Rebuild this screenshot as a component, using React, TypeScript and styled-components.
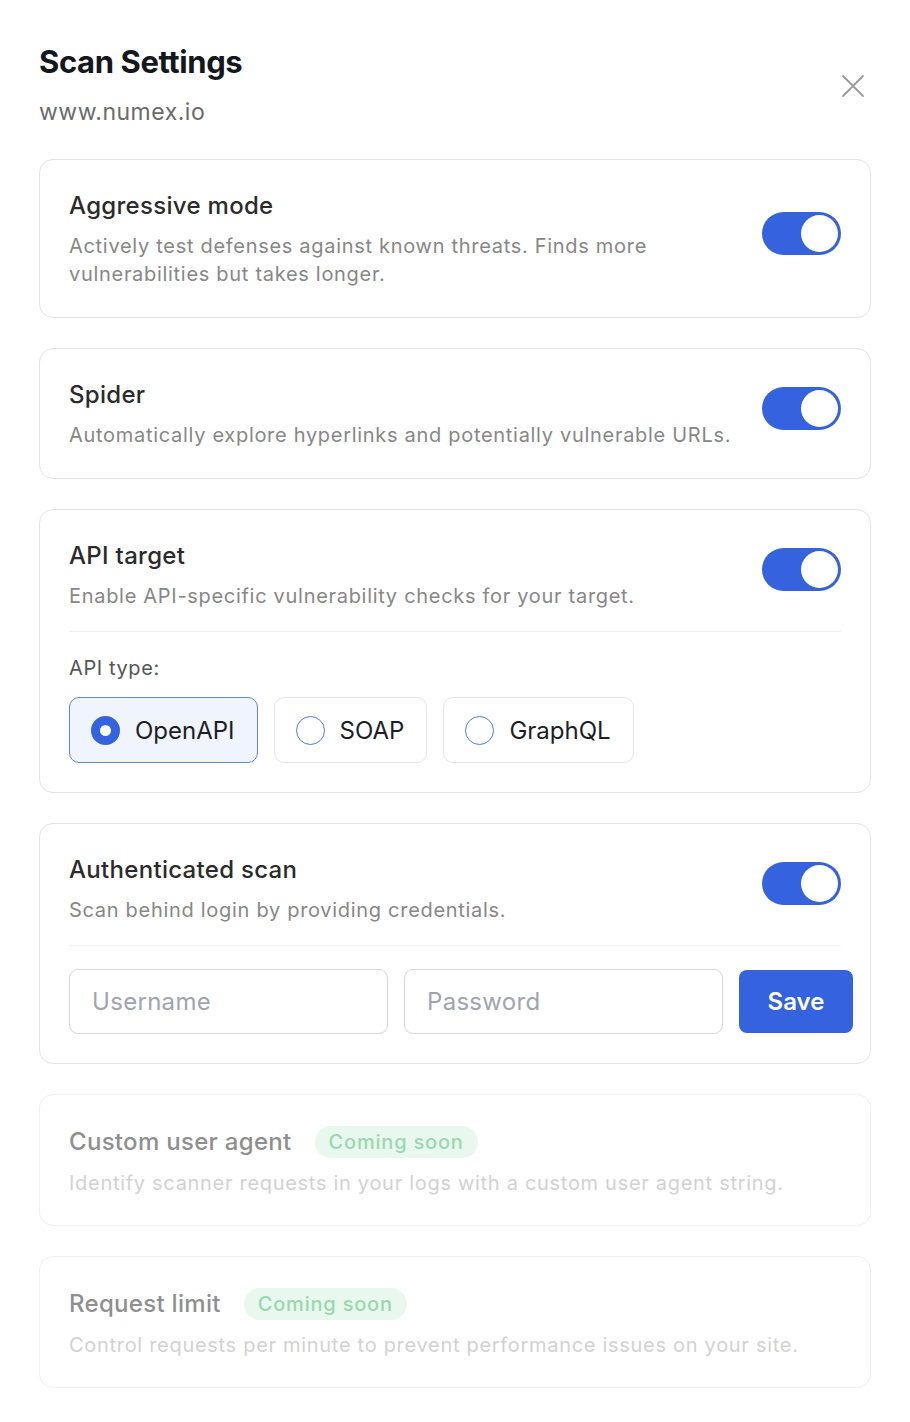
import React, { useState } from "react";
import styled, { createGlobalStyle } from "styled-components";

const Global = createGlobalStyle`
  html, body { margin: 0; padding: 0; background: #fff; }
  body { font-family: Inter, "Noto Sans", sans-serif; -webkit-font-smoothing: antialiased; }
  * { box-sizing: border-box; }
`;

const Page = styled.div`
  width: 910px;
  padding: 42px 39px 36px 39px;
  display: flex;
  flex-direction: column;
`;

const Header = styled.div`
  display: flex;
  justify-content: space-between;
  align-items: flex-start;
  margin-bottom: 32px;
`;

const HeaderText = styled.div`
  display: flex;
  flex-direction: column;
  gap: 15px;
`;

const Title = styled.h1`
  margin: 0;
  font-size: 31px;
  line-height: 40px;
  font-weight: 700;
  letter-spacing: -0.4px;
  color: #14171c;
`;

const Subtitle = styled.div`
  font-size: 23px;
  line-height: 30px;
  letter-spacing: 0.5px;
  color: #6b6b6b;
`;

const CloseButton = styled.button`
  border: none;
  background: none;
  padding: 0;
  margin: 32px 6px 0 0;
  width: 24px;
  height: 24px;
  color: #9a9a9a;
  cursor: pointer;
`;

const Cards = styled.div`
  display: flex;
  flex-direction: column;
  gap: 30px;
`;

const Card = styled.div<{ $disabled?: boolean }>`
  border: 1px solid ${(p) => (p.$disabled ? "#efefef" : "#e4e4e4")};
  border-radius: 14px;
  padding: 31px 29px ${(p) => (p.$disabled ? "28px" : "29px")} 29px;
  display: flex;
  flex-direction: column;
`;

const Row = styled.div`
  display: flex;
  justify-content: space-between;
  align-items: center;
  gap: 24px;
`;

const TextCol = styled.div`
  display: flex;
  flex-direction: column;
  gap: 11px;
  flex: 1;
  max-width: 600px;
`;

const CardTitle = styled.div<{ $disabled?: boolean }>`
  display: flex;
  align-items: center;
  gap: 23px;
  font-size: 24px;
  line-height: 30px;
  font-weight: 500;
  letter-spacing: 0.3px;
  color: ${(p) => (p.$disabled ? "#8f8f8f" : "#2b2b2b")};
`;

const Desc = styled.div<{ $disabled?: boolean; $wide?: boolean }>`
  font-size: 20px;
  line-height: 28px;
  letter-spacing: 0.7px;
  color: ${(p) => (p.$disabled ? "#d2d2d2" : "#878787")};
  ${(p) => (p.$wide ? "max-width: none; white-space: nowrap;" : "")}
`;

const Badge = styled.span`
  background: #e9f8ef;
  color: #9ad7b0;
  font-size: 20px;
  line-height: 24px;
  font-weight: 500;
  letter-spacing: 0.8px;
  padding: 4px 14px;
  border-radius: 999px;
`;

const Toggle = styled.button<{ $on: boolean }>`
  flex: none;
  width: 79px;
  height: 43px;
  margin-bottom: 13px;
  border-radius: 999px;
  border: none;
  padding: 3px;
  background: ${(p) => (p.$on ? "#3563e0" : "#d5d5d5")};
  display: flex;
  justify-content: ${(p) => (p.$on ? "flex-end" : "flex-start")};
  cursor: pointer;
`;

const Knob = styled.span`
  width: 37px;
  height: 37px;
  border-radius: 50%;
  background: #fff;
`;

const Divider = styled.hr`
  border: none;
  border-top: 1px solid #f0f0f0;
  margin: 21px 0 20px 0;
`;

const Label = styled.div`
  font-size: 20px;
  line-height: 32px;
  letter-spacing: 0.6px;
  color: #555;
  margin-bottom: 13px;
`;

const RadioGroup = styled.div`
  display: flex;
  gap: 16px;
`;

const RadioOption = styled.button<{ $selected: boolean }>`
  height: 66px;
  padding: 0 22px 0 21px;
  display: flex;
  align-items: center;
  gap: 15px;
  border-radius: 10px;
  border: 1px solid ${(p) => (p.$selected ? "#5b86ea" : "#e6e6e6")};
  background: ${(p) => (p.$selected ? "#eff4fd" : "#fff")};
  font-family: inherit;
  font-size: 24px;
  color: #1b1e24;
  cursor: pointer;
`;

const RadioDot = styled.span<{ $selected: boolean }>`
  width: 29px;
  height: 29px;
  border-radius: 50%;
  flex: none;
  ${(p) =>
    p.$selected
      ? "border: 9.5px solid #3563e0; background: #fff;"
      : "border: 1.5px solid #4f7be6; background: #fff;"}
`;

const FieldRow = styled.div`
  display: flex;
  align-items: center;
  gap: 16px;
  margin: 3px -12px 0 0;
`;

const Input = styled.input`
  flex: 1;
  min-width: 0;
  height: 65px;
  border: 1px solid #d6d6d6;
  border-radius: 9px;
  padding: 0 22px;
  font-family: inherit;
  font-size: 24px;
  letter-spacing: 0.3px;
  color: #222;
  outline: none;
  &::placeholder { color: #a0a4ac; }
`;

const SaveButton = styled.button`
  flex: none;
  width: 114px;
  height: 63px;
  border: none;
  border-radius: 8px;
  background: #3563e0;
  color: #fff;
  font-family: inherit;
  font-size: 24px;
  font-weight: 600;
  cursor: pointer;
`;

function Switch({ initial = true }: { initial?: boolean }) {
  const [on, setOn] = useState(initial);
  return (
    <Toggle $on={on} onClick={() => setOn(!on)} aria-pressed={on}>
      <Knob />
    </Toggle>
  );
}

export default function App() {
  const [api, setApi] = useState("OpenAPI");
  return (
    <>
      <Global />
      <Page>
        <Header>
          <HeaderText>
            <Title>Scan Settings</Title>
            <Subtitle>www.numex.io</Subtitle>
          </HeaderText>
          <CloseButton aria-label="Close">
            <svg width="24" height="24" viewBox="0 0 24 24" fill="none" stroke="currentColor" strokeWidth="1.8" strokeLinecap="round">
              <path d="M2 2 L22 22 M22 2 L2 22" />
            </svg>
          </CloseButton>
        </Header>
        <Cards>
          <Card>
            <Row>
              <TextCol>
                <CardTitle>Aggressive mode</CardTitle>
                <Desc>Actively test defenses against known threats. Finds more vulnerabilities but takes longer.</Desc>
              </TextCol>
              <Switch />
            </Row>
          </Card>
          <Card>
            <Row>
              <TextCol>
                <CardTitle>Spider</CardTitle>
                <Desc $wide>Automatically explore hyperlinks and potentially vulnerable URLs.</Desc>
              </TextCol>
              <Switch />
            </Row>
          </Card>
          <Card>
            <Row>
              <TextCol>
                <CardTitle>API target</CardTitle>
                <Desc $wide>Enable API-specific vulnerability checks for your target.</Desc>
              </TextCol>
              <Switch />
            </Row>
            <Divider />
            <Label>API type:</Label>
            <RadioGroup>
              {["OpenAPI", "SOAP", "GraphQL"].map((t) => (
                <RadioOption key={t} $selected={api === t} onClick={() => setApi(t)}>
                  <RadioDot $selected={api === t} />
                  {t}
                </RadioOption>
              ))}
            </RadioGroup>
          </Card>
          <Card>
            <Row>
              <TextCol>
                <CardTitle>Authenticated scan</CardTitle>
                <Desc $wide>Scan behind login by providing credentials.</Desc>
              </TextCol>
              <Switch />
            </Row>
            <Divider />
            <FieldRow>
              <Input placeholder="Username" />
              <Input placeholder="Password" type="password" />
              <SaveButton>Save</SaveButton>
            </FieldRow>
          </Card>
          <Card $disabled>
            <TextCol>
              <CardTitle $disabled>
                Custom user agent <Badge>Coming soon</Badge>
              </CardTitle>
              <Desc $disabled $wide>Identify scanner requests in your logs with a custom user agent string.</Desc>
            </TextCol>
          </Card>
          <Card $disabled>
            <TextCol>
              <CardTitle $disabled>
                Request limit <Badge>Coming soon</Badge>
              </CardTitle>
              <Desc $disabled $wide>Control requests per minute to prevent performance issues on your site.</Desc>
            </TextCol>
          </Card>
        </Cards>
      </Page>
    </>
  );
}
